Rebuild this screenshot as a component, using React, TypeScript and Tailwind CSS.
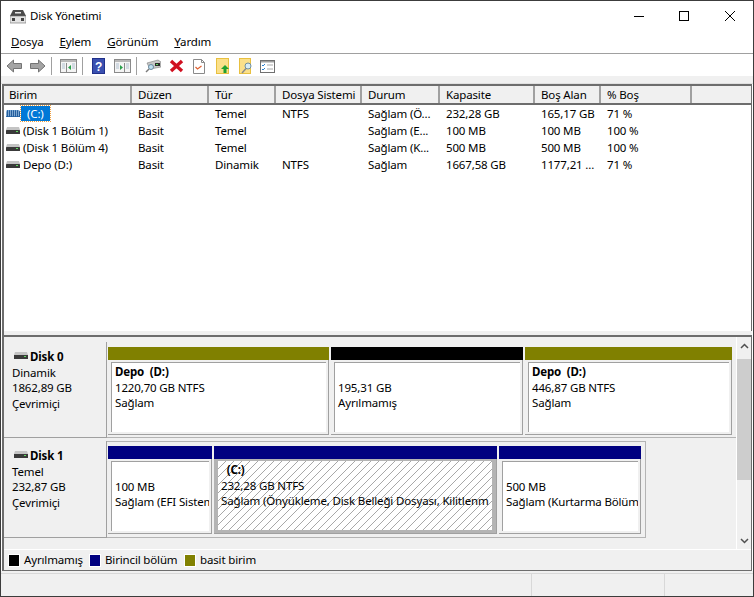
const font = "font-['Noto_Sans','Open_Sans',sans-serif]";

const columns = [
  { label: 'Birim', w: 'w-[128px]' },
  { label: 'Düzen', w: 'w-[77px]' },
  { label: 'Tür', w: 'w-[67px]' },
  { label: 'Dosya Sistemi', w: 'w-[86px]' },
  { label: 'Durum', w: 'w-[78px]' },
  { label: 'Kapasite', w: 'w-[95px]' },
  { label: 'Boş Alan', w: 'w-[66px]' },
  { label: '% Boş', w: 'w-[91px]' },
];

const rows = [
  ['(C:)', 'Basit', 'Temel', 'NTFS', 'Sağlam (Ö...', '232,28 GB', '165,17 GB', '71 %'],
  ['(Disk 1 Bölüm 1)', 'Basit', 'Temel', '', 'Sağlam (E...', '100 MB', '100 MB', '100 %'],
  ['(Disk 1 Bölüm 4)', 'Basit', 'Temel', '', 'Sağlam (K...', '500 MB', '500 MB', '100 %'],
  ['Depo (D:)', 'Basit', 'Dinamik', 'NTFS', 'Sağlam', '1667,58 GB', '1177,21 ...', '71 %'],
];

function DriveIcon({ striped }: { striped?: boolean }) {
  if (striped) {
    return (
      <svg width="14" height="7" viewBox="0 0 14 7" className="shrink-0">
        <path d="M1 0h12l1 2v5H0V2z" fill="#2f6fb0" />
        <path d="M0 1h14M0 3h14M0 5h14" stroke="#cfe2f2" strokeDasharray="1 1" />
        <path d="M0 2h14M0 4h14M0 6h14" stroke="#1c4f88" strokeDasharray="1 1" strokeDashoffset="1" />
      </svg>
    );
  }
  return (
    <svg width="14" height="7" viewBox="0 0 14 7" className="shrink-0">
      <path d="M1 0h12l1 3H0z" fill="#c4c4c4" />
      <rect x="0" y="3" width="14" height="4" rx="0.500" fill="#3a3a3a" />
      <rect x="10" y="4" width="2" height="1" fill="#5fdc5f" />
    </svg>
  );
}

function NavArrow({ flip }: { flip?: boolean }) {
  return (
    <svg width="17" height="14" viewBox="0 0 17 14" className={flip ? 'scale-x-[-1]' : ''}>
      <path d="M7.500 1 1 7l6.500 6v-3.500h8v-5h-8z" fill="#a4a4a4" stroke="#747474" />
    </svg>
  );
}

function PanelIcon({ right }: { right?: boolean }) {
  return (
    <svg width="17" height="14" viewBox="0 0 17 14">
      <rect x="0.500" y="0.500" width="16" height="13" fill="#f4f4f4" stroke="#8a8a8a" />
      <rect x="1" y="1" width="15" height="2" fill="#b8b8b8" />
      <path d={right ? 'M10.500 4v9' : 'M6.500 4v9'} stroke="#8a8a8a" />
      <path d="M2 5h3M2 7h3M2 9h3M12 5h3M12 7h3M12 9h3" stroke="#b0c0d0" />
      <path d={right ? 'M6 6v5l3-2.500z' : 'M11 6v5L8 8.500z'} fill="#2aa04a" />
    </svg>
  );
}

function Toolbar() {
  return (
    <div className="h-[22px] pt-[2px] flex items-center pl-[5px] shrink-0">
      <NavArrow />
      <div className="w-[6px]" />
      <NavArrow flip />
      <div className="w-px h-[18px] bg-[#a0a0a0] ml-[5px] mr-[8px]" />
      <PanelIcon />
      <div className="w-px h-[18px] bg-[#a0a0a0] ml-[5px] mr-[9px]" />
      <svg width="13" height="16" viewBox="0 0 13 16">
        <rect width="13" height="16" fill="#3a50b0" />
        <rect x="0.500" y="0.500" width="12" height="15" fill="none" stroke="#20308a" />
        <text x="6.500" y="12.500" textAnchor="middle" fontSize="12" fontWeight="700" fill="#fff" fontFamily="Liberation Sans">?</text>
      </svg>
      <div className="w-[9px]" />
      <PanelIcon right />
      <div className="w-px h-[18px] bg-[#a0a0a0] ml-[5px] mr-[8px]" />
      <svg width="16" height="14" viewBox="0 0 16 14">
        <path d="M2 4 13 1l3 2v5L5 10z" fill="#c8c8c8" stroke="#7a7a7a" strokeWidth="0.600" />
        <rect x="10" y="4" width="5" height="3" fill="#2a2a2a" />
        <rect x="11" y="5" width="2" height="1" fill="#5fdc5f" />
        <circle cx="6" cy="8" r="2.500" fill="#bfe0f0" stroke="#6a8aa0" />
        <path d="M4 10 1 13" stroke="#7a7a7a" strokeWidth="1.500" />
      </svg>
      <div className="w-[8px]" />
      <svg width="15" height="14" viewBox="0 0 15 14">
        <path d="M2 2l11 10M13 2 2 12" stroke="#d01020" strokeWidth="3.400" />
      </svg>
      <div className="w-[9px]" />
      <svg width="12" height="15" viewBox="0 0 12 15">
        <path d="M.5.5h8l3 3v11H.5z" fill="#fff" stroke="#8a8a8a" />
        <path d="M8.500.5v3h3" fill="none" stroke="#8a8a8a" />
        <path d="M2.500 8l2 2 4-3" fill="none" stroke="#e06030" strokeWidth="1.200" />
      </svg>
      <div className="w-[11px]" />
      <svg width="13" height="16" viewBox="0 0 13 16">
        <rect x="0.500" y="0.500" width="12" height="15" fill="#fbe08a" stroke="#e8c040" />
        <path d="M9 7l4 4h-2.500v4h-3v-4H5z" fill="#20a030" />
      </svg>
      <div className="w-[10px]" />
      <svg width="14" height="16" viewBox="0 0 14 16">
        <rect x="0.500" y="0.500" width="11" height="15" fill="#fbe08a" stroke="#e8c040" />
        <circle cx="9" cy="8" r="3" fill="#d8ecf4" stroke="#7090a0" />
        <path d="M7 10.500 3 15" stroke="#8a8a8a" strokeWidth="1.500" />
      </svg>
      <div className="w-[7px]" />
      <svg width="15" height="13" viewBox="0 0 15 13">
        <rect x="0.500" y="0.500" width="14" height="12" fill="#fff" stroke="#707070" />
        <rect x="1" y="1" width="13" height="1.500" fill="#a0a0a0" />
        <path d="M2 5l1 1 2-2M2 9l1 1 2-2" fill="none" stroke="#2a80d0" />
        <path d="M7 5h6M7 9h6" stroke="#a8a8a8" />
      </svg>
    </div>
  );
}

function VolumeTable() {
  return (
    <div className="h-[247px] shrink-0 mx-[1px] border-t-2 border-l-2 border-r border-[#6d6d6d] bg-white overflow-hidden">
      <div className="flex h-[19px] bg-[#f0f0f0] border-b-2 border-[#6d6d6d]">
        {columns.map((c) => (
          <div key={c.label} className={`${c.w} shrink-0 border-r-2 border-[#a0a0a0] pl-[6px] first:pl-[5px] leading-[17px] whitespace-nowrap`}>
            {c.label}
          </div>
        ))}
      </div>
      {rows.map((r, i) => (
        <div key={i} className="flex h-[17px] leading-[17px]">
          {r.map((cell, j) =>
            j === 0 ? (
              <div key={j} className={`${columns[j].w} shrink-0 flex items-center pl-[2px] gap-[3px] whitespace-nowrap`}>
                <DriveIcon striped={i === 0} />
                {i === 0 ? (
                  <span className="bg-[#0078d7] text-white px-[6px] h-[15px] leading-[15px] outline-1 outline-dotted outline-[#f0a040] -ml-[2px]">{cell}</span>
                ) : (
                  <span>{cell}</span>
                )}
              </div>
            ) : (
              <div key={j} className={`${columns[j].w} shrink-0 pl-[6px] whitespace-nowrap overflow-hidden`}>
                {cell}
              </div>
            ),
          )}
        </div>
      ))}
    </div>
  );
}

function Partition({ color, w, title, size, status, selected }: {
  color: string;
  w: string;
  title?: string;
  size: string;
  status: string;
  selected?: boolean;
}) {
  return (
    <div className={`${w} shrink-0 flex flex-col h-[88px]`}>
      <div className={`${color} h-[13px] shrink-0`} />
      <div className={`flex-1 min-h-0 border-r border-b border-[#a0a0a0] ${selected ? 'bg-[#b4b4b4] px-[4px] pt-[2px] pb-[3px]' : 'bg-[#f0f0f0] pl-[3px] pr-[2px] pt-[2px] pb-[2px]'}`}>
        <div className={`h-full overflow-hidden whitespace-pre leading-[15.500px] pt-[1px] ${selected
          ? 'pl-[3px] bg-white bg-[repeating-linear-gradient(135deg,#fff_0,#fff_5px,#a8a8a8_5px,#a8a8a8_5.700px)]'
          : 'pl-[3px] bg-white border-l border-t border-[#a0a0a0]'}`}>
          <div className="font-bold h-[15.500px]">{title ?? ''}</div>
          <div>{size}</div>
          <div>{status}</div>
        </div>
      </div>
    </div>
  );
}

function DiskLabel({ name, kind, size }: { name: string; kind: string; size: string }) {
  return (
    <div className="w-[103px] shrink-0 bg-[#f0f0f0] border-r border-b border-[#a0a0a0] pl-[8px] pt-[7px] leading-[15.500px]">
      <div className="flex items-center gap-[2px] font-bold">
        <svg width="14" height="7" viewBox="0 0 14 7" className="ml-[2px] -mt-[3px]">
          <path d="M1 0h12l1 3H0z" fill="#c4c4c4" />
          <rect y="3" width="14" height="4" fill="#3a3a3a" />
          <rect x="10" y="4" width="2" height="1" fill="#5fdc5f" />
        </svg>
        {name}
      </div>
      <div>{kind}</div>
      <div>{size}</div>
      <div>Çevrimiçi</div>
    </div>
  );
}

export default function App() {
  return (
    <div className={`${font} w-[754px] h-[597px] overflow-hidden bg-white text-[11.500px] tracking-[-0.150px] text-black border border-[#3c3c3c] flex flex-col`}>
      <div className="h-[30px] shrink-0 flex items-center pl-[9px]">
        <svg width="16" height="16" viewBox="0 0 16 16" className="mr-[4px]">
          <path d="M3 2h10l3 6H0z" fill="#4a4a4a" />
          <rect x="5" y="4" width="6" height="1.500" fill="#e8e8e8" />
          <rect x="0" y="8" width="16" height="7" fill="#e4e4e4" stroke="#6a6a6a" strokeWidth="0.600" />
          <rect x="2" y="10" width="3" height="3" fill="#444" />
          <rect x="11" y="10" width="3" height="3" fill="#444" />
        </svg>
        <span>Disk Yönetimi</span>
        <div className="ml-auto flex items-center mb-[1px]">
          <svg width="10" height="10" viewBox="0 0 10 10" className="mr-[35px]"><path d="M0 5.500h10" stroke="#000" /></svg>
          <svg width="10" height="10" viewBox="0 0 10 10" className="mr-[36px]"><rect x="0.500" y="0.500" width="9" height="9" fill="none" stroke="#000" /></svg>
          <svg width="10" height="10" viewBox="0 0 10 10" className="mr-[18px]"><path d="M0 0l10 10M10 0 0 10" stroke="#000" /></svg>
        </div>
      </div>
      <div className="h-[23px] shrink-0 flex items-start pl-[10px] pt-[2px] gap-[16px] border-b border-[#a0a0a0] leading-[18px]">
        <span><u>D</u>osya</span>
        <span><u>E</u>ylem</span>
        <span><u>G</u>örünüm</span>
        <span><u>Y</u>ardım</span>
      </div>
      <Toolbar />
      <div className="h-[8px] shrink-0 bg-[#f0f0f0] border-b border-[#e0e0e0]" />
      <VolumeTable />
      <div className="h-[4px] shrink-0 bg-[#f0f0f0] mx-[1px] border-l-2 border-[#6d6d6d]" />
      <div className="h-[236px] shrink-0 mx-[1px] flex flex-col border-t-2 border-l-2 border-r border-b border-[#6d6d6d] bg-[#f0f0f0]">
        <div className="flex h-[213px] shrink-0 border-b border-white">
          <div className="flex-1 flex flex-col pt-[5px]">
            <div className="h-[96px] flex shrink-0">
              <DiskLabel name="Disk 0" kind="Dinamik" size="1862,89 GB" />
              <div className="flex-1 flex gap-[2px] pl-[1px] pt-[5px] border-b border-[#b4b4b4]">
                <Partition color="bg-[#808000]" w="w-[221px]" title="Depo  (D:)" size="1220,70 GB NTFS" status="Sağlam" />
                <Partition color="bg-black" w="w-[192px]" size="195,31 GB" status="Ayrılmamış" />
                <Partition color="bg-[#808000]" w="w-[207px]" title="Depo  (D:)" size="446,87 GB NTFS" status="Sağlam" />
              </div>
            </div>
            <div className="h-[97px] flex shrink-0 mt-[3px]">
              <DiskLabel name="Disk 1" kind="Temel" size="232,87 GB" />
              <div className="flex gap-[2px] pl-[1px] pr-[4px] pt-[4px] border-t border-r border-b border-[#b4b4b4]">
                <Partition color="bg-[#000080]" w="w-[104px]" size="100 MB" status="Sağlam (EFI Sistem" />
                <Partition color="bg-[#000080]" w="w-[283px]" title="  (C:)" size="232,28 GB NTFS" status="Sağlam (Önyükleme, Disk Belleği Dosyası, Kilitlenm" selected />
                <Partition color="bg-[#000080]" w="w-[142px]" size="500 MB" status="Sağlam (Kurtarma Bölüm" />
              </div>
            </div>
          </div>
          <div className="w-[15px] shrink-0 flex flex-col items-center border-l border-white">
            <svg width="9" height="6" viewBox="0 0 9 6" className="mt-[6px] mb-[10px]"><path d="M1 5l3.500-3.500L8 5" fill="none" stroke="#505050" strokeWidth="1.500" /></svg>
            <div className="w-full h-[121px] bg-[#cdcdcd]" />
            <svg width="9" height="6" viewBox="0 0 9 6" className="mt-auto mb-[5px]"><path d="M1 1l3.500 3.500L8 1" fill="none" stroke="#505050" strokeWidth="1.500" /></svg>
          </div>
        </div>
        <div className="flex-1 flex items-center pl-[4px]">
          <span className="w-[12px] h-[13px] bg-black border border-white shrink-0 mr-[4px]" />
          <span className="w-[65px]">Ayrılmamış</span>
          <span className="w-[12px] h-[13px] bg-[#000080] border border-white shrink-0 mr-[4px]" />
          <span className="w-[79px]">Birincil bölüm</span>
          <span className="w-[12px] h-[13px] bg-[#808000] border border-white shrink-0 mr-[4px]" />
          <span>basit birim</span>
        </div>
      </div>
      <div className="flex-1 bg-[#f0f0f0] flex pt-[2px]">
        <div className="w-[531px] border-r border-t border-[#d8d8d8]" />
        <div className="w-[133px] border-r border-t border-[#d8d8d8]" />
        <div className="flex-1 border-t border-[#d8d8d8]" />
      </div>
    </div>
  );
}
